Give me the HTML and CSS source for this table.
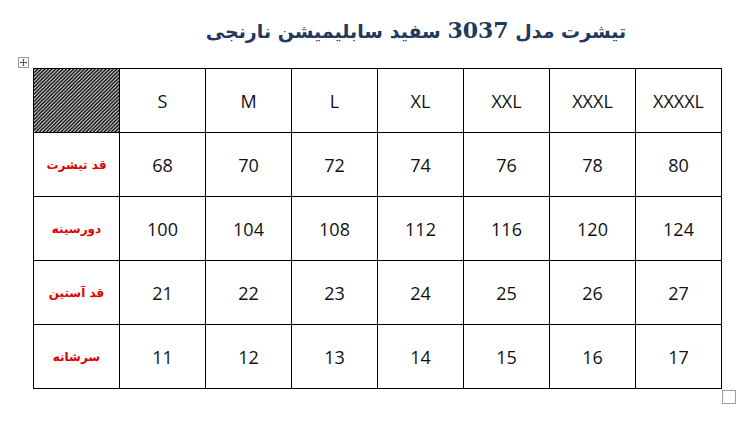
FILE: index.html
```html
<!DOCTYPE html>
<html lang="fa">
<head>
<meta charset="utf-8">
<link rel="stylesheet" href="styles.css">
</head>
<body>
<div class="page">
  <h1 class="title" dir="rtl">تیشرت مدل <span class="num">3037</span> سفید سابلیمیشن نارنجی</h1>
  <div class="table-wrap">
    <span class="move-handle">
      <svg width="11" height="11" viewBox="0 0 11 11">
        <rect x="0.5" y="0.5" width="10" height="10" fill="#fff" stroke="#9a9a9a"/>
        <path d="M5.5 2v7M2 5.5h7" stroke="#555" stroke-width="1"/>
        <path d="M5.5 1.8l-1.3 1.3h2.6zM5.5 9.2l-1.3-1.3h2.6zM1.8 5.5l1.3-1.3v2.6zM9.2 5.5l-1.3-1.3v2.6z" fill="#555"/>
      </svg>
    </span>
    <table class="sizes">
      <tr>
        <td class="hatch">
          <svg class="hatch-svg" width="85" height="63">
            <defs>
              <pattern id="diag" width="3.6" height="3.6" patternUnits="userSpaceOnUse">
                <path d="M-1,4.6 L4.6,-1 M-1,1 L1,-1 M2.6,4.6 L4.6,2.6" stroke="#000" stroke-width="1.5"/>
              </pattern>
            </defs>
            <rect width="85" height="63" fill="url(#diag)"/>
          </svg>
        </td>
        <td>S</td><td>M</td><td>L</td><td>XL</td><td>XXL</td><td>XXXL</td><td>XXXXL</td>
      </tr>
      <tr>
        <td class="label" dir="rtl">قد تیشرت</td>
        <td>68</td><td>70</td><td>72</td><td>74</td><td>76</td><td>78</td><td>80</td>
      </tr>
      <tr>
        <td class="label" dir="rtl">دورسینه</td>
        <td>100</td><td>104</td><td>108</td><td>112</td><td>116</td><td>120</td><td>124</td>
      </tr>
      <tr>
        <td class="label" dir="rtl">قد آستین</td>
        <td>21</td><td>22</td><td>23</td><td>24</td><td>25</td><td>26</td><td>27</td>
      </tr>
      <tr>
        <td class="label" dir="rtl">سرشانه</td>
        <td>11</td><td>12</td><td>13</td><td>14</td><td>15</td><td>16</td><td>17</td>
      </tr>
    </table>
    <span class="resize-handle"></span>
  </div>
</div>
</body>
</html>
```
FILE: styles.css
```css
html, body {
  margin: 0;
  padding: 0;
  background: #fff;
}
.page {
  width: 754px;
  height: 427px;
  position: relative;
}
.title {
  margin: 0;
  height: 68px;
  box-sizing: border-box;
  padding: 14px 0 0 78px;
  text-align: center;
  font-family: "DejaVu Sans", sans-serif;
  font-weight: bold;
  font-size: 19px;
  line-height: 32px;
  color: #1f3a5c;
}
.title .num {
  font-family: "DejaVu Serif", serif;
  font-size: 22px;
}
.table-wrap {
  position: relative;
  margin-left: 33px;
  width: 689px;
}
.sizes {
  border-collapse: collapse;
  table-layout: fixed;
  width: 689px;
}
.sizes td {
  height: 63px;
  padding: 0;
  border: 1px solid #000;
  text-align: center;
  vertical-align: middle;
  font-family: "Open Sans", "Liberation Sans", sans-serif;
  font-size: 18px;
  color: #111;
}
.sizes td.label {
  font-family: "DejaVu Sans", sans-serif;
  font-weight: bold;
  font-size: 12px;
  color: #e00000;
}
.sizes td.hatch {
  line-height: 0;
  overflow: hidden;
}
.hatch-svg {
  display: block;
  width: 100%;
  height: 63px;
}
.move-handle {
  position: absolute;
  left: -15px;
  top: -11px;
  width: 11px;
  height: 11px;
  line-height: 0;
}
.resize-handle {
  position: absolute;
  right: -14px;
  bottom: -15px;
  width: 14px;
  height: 14px;
  border: 1px solid #a0a0a0;
  box-sizing: border-box;
}
```
